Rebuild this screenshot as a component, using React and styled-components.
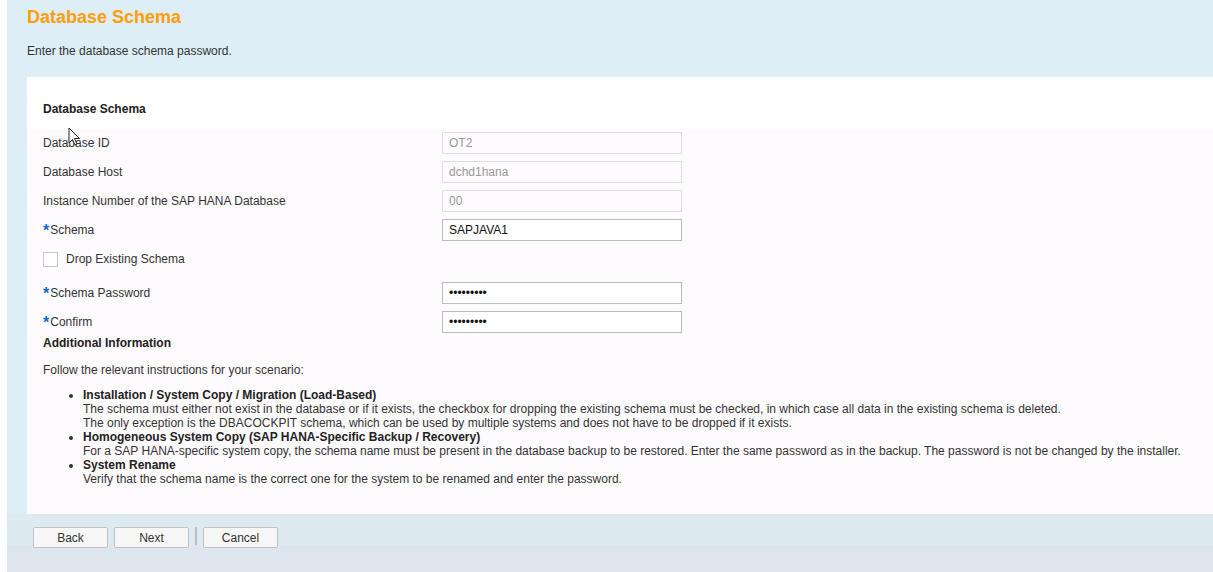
import React from 'react'
import styled, { createGlobalStyle } from 'styled-components'

const GlobalStyle = createGlobalStyle`
  html, body {
    margin: 0;
    padding: 0;
    background: #ffffff;
    font-family: "Liberation Sans", Arial, sans-serif;
    font-size: 12px;
    color: #333333;
  }
`

const Page = styled.div`
  position: relative;
  margin-left: 7px;
  height: 572px;
  display: flex;
  flex-direction: column;
  background: #deeef6;
`

const Header = styled.header`
  padding: 7px 0 19px 20px;
`

const Title = styled.h1`
  margin: 0;
  font-size: 18px;
  line-height: 21px;
  font-weight: bold;
  color: #ff9d0a;
`

const Intro = styled.p`
  margin: 16px 0 0;
  line-height: 14px;
  color: #333;
`

const Panel = styled.main`
  margin-left: 20px;
  padding: 25px 0 28px 16px;
  background: linear-gradient(#ffffff 0 52px, #fefbfe 52px);
`

const SectionTitle = styled.div`
  font-weight: bold;
  line-height: 14px;
  color: #222;
  margin-top: ${p => p.$top || 0}px;
`

const Form = styled.div`
  display: grid;
  grid-template-columns: 399px 240px;
  row-gap: 7px;
  margin-top: 16px;
`

const Label = styled.label`
  display: flex;
  align-items: center;
  height: 22px;
  color: #333;
`

const Star = styled.span`
  color: #0a6ed1;
  font-weight: bold;
  font-size: 16px;
  line-height: 12px;
  margin-right: 1px;
  position: relative;
  top: 1px;
`

const Field = styled.input`
  box-sizing: border-box;
  width: 240px;
  height: 22px;
  margin: 0;
  padding: 0 6px;
  font-family: "Liberation Sans", Arial, sans-serif;
  font-size: 12px;
  outline: none;
  border: 1px solid ${p => (p.readOnly ? '#dedede' : '#bcbcbc')};
  background: ${p => (p.readOnly ? '#fdfbfd' : '#ffffff')};
  color: ${p => (p.readOnly ? '#999999' : '#111111')};
`

const CheckRow = styled.label`
  grid-column: 1 / span 2;
  display: flex;
  align-items: center;
  gap: 8px;
  height: 22px;
  margin-bottom: 5px;
  color: #333;
`

const Box = styled.span`
  box-sizing: border-box;
  width: 15px;
  height: 15px;
  border: 1px solid #c8c8c8;
  background: #fff;
`

const Text = styled.p`
  margin: 13px 0 0;
  line-height: 14px;
`

const List = styled.ul`
  margin: 11px 0 0;
  padding-left: 40px;
  line-height: 14px;
  color: #333;
`

const Item = styled.li`
  b {
    color: #222;
  }
`

const Footer = styled.footer`
  flex: 1;
  display: flex;
  align-items: flex-start;
  gap: 6px;
  padding: 13px 0 0 26px;
  background: linear-gradient(#ddebf0 0 31px, #dde6ee 31px);
`

const Button = styled.button`
  box-sizing: border-box;
  width: 75px;
  height: 21px;
  padding: 0;
  border: 1px solid #c2c2c2;
  border-radius: 2px;
  background: #f7f7f7;
  font-family: "Liberation Sans", Arial, sans-serif;
  font-size: 12px;
  color: #333;
`

const Divider = styled.span`
  width: 2px;
  height: 18px;
  background: #bdbdbd;
`

const Cursor = styled.svg`
  position: absolute;
  left: 61px;
  top: 127px;
`

const rows = [
  { label: 'Database ID', value: 'OT2', readOnly: true },
  { label: 'Database Host', value: 'dchd1hana', readOnly: true },
  { label: 'Instance Number of the SAP HANA Database', value: '00', readOnly: true },
  { label: 'Schema', value: 'SAPJAVA1', required: true },
]

const secrets = [
  { label: 'Schema Password', value: '123456789' },
  { label: 'Confirm', value: '123456789' },
]

export default function App() {
  return (
    <>
      <GlobalStyle />
      <Page>
        <Header>
          <Title>Database Schema</Title>
          <Intro>Enter the database schema password.</Intro>
        </Header>
        <Panel>
          <SectionTitle>Database Schema</SectionTitle>
          <Form>
            {rows.map(r => (
              <React.Fragment key={r.label}>
                <Label>{r.required && <Star>*</Star>}{r.label}</Label>
                <Field readOnly={r.readOnly} defaultValue={r.value} />
              </React.Fragment>
            ))}
            <CheckRow>
              <Box />
              Drop Existing Schema
            </CheckRow>
            {secrets.map(r => (
              <React.Fragment key={r.label}>
                <Label><Star>*</Star>{r.label}</Label>
                <Field type="password" defaultValue={r.value} />
              </React.Fragment>
            ))}
          </Form>
          <SectionTitle $top={3}>Additional Information</SectionTitle>
          <Text>Follow the relevant instructions for your scenario:</Text>
          <List>
            <Item>
              <b>Installation / System Copy / Migration (Load-Based)</b><br />
              The schema must either not exist in the database or if it exists, the checkbox for dropping the existing schema must be checked, in which case all data in the existing schema is deleted.<br />
              The only exception is the DBACOCKPIT schema, which can be used by multiple systems and does not have to be dropped if it exists.
            </Item>
            <Item>
              <b>Homogeneous System Copy (SAP HANA-Specific Backup / Recovery)</b><br />
              For a SAP HANA-specific system copy, the schema name must be present in the database backup to be restored. Enter the same password as in the backup. The password is not be changed by the installer.
            </Item>
            <Item>
              <b>System Rename</b><br />
              Verify that the schema name is the correct one for the system to be renamed and enter the password.
            </Item>
          </List>
        </Panel>
        <Footer>
          <Button>Back</Button>
          <Button>Next</Button>
          <Divider />
          <Button>Cancel</Button>
        </Footer>
        <Cursor width="14" height="20" viewBox="0 0 14 20">
          <path d="M1 1 L1 16 L4.5 12.5 L7 18 L9 17 L6.5 11.5 L11.5 11.5 Z" fill="#fff" stroke="#222" strokeWidth="1" strokeLinejoin="round" />
        </Cursor>
      </Page>
    </>
  )
}
